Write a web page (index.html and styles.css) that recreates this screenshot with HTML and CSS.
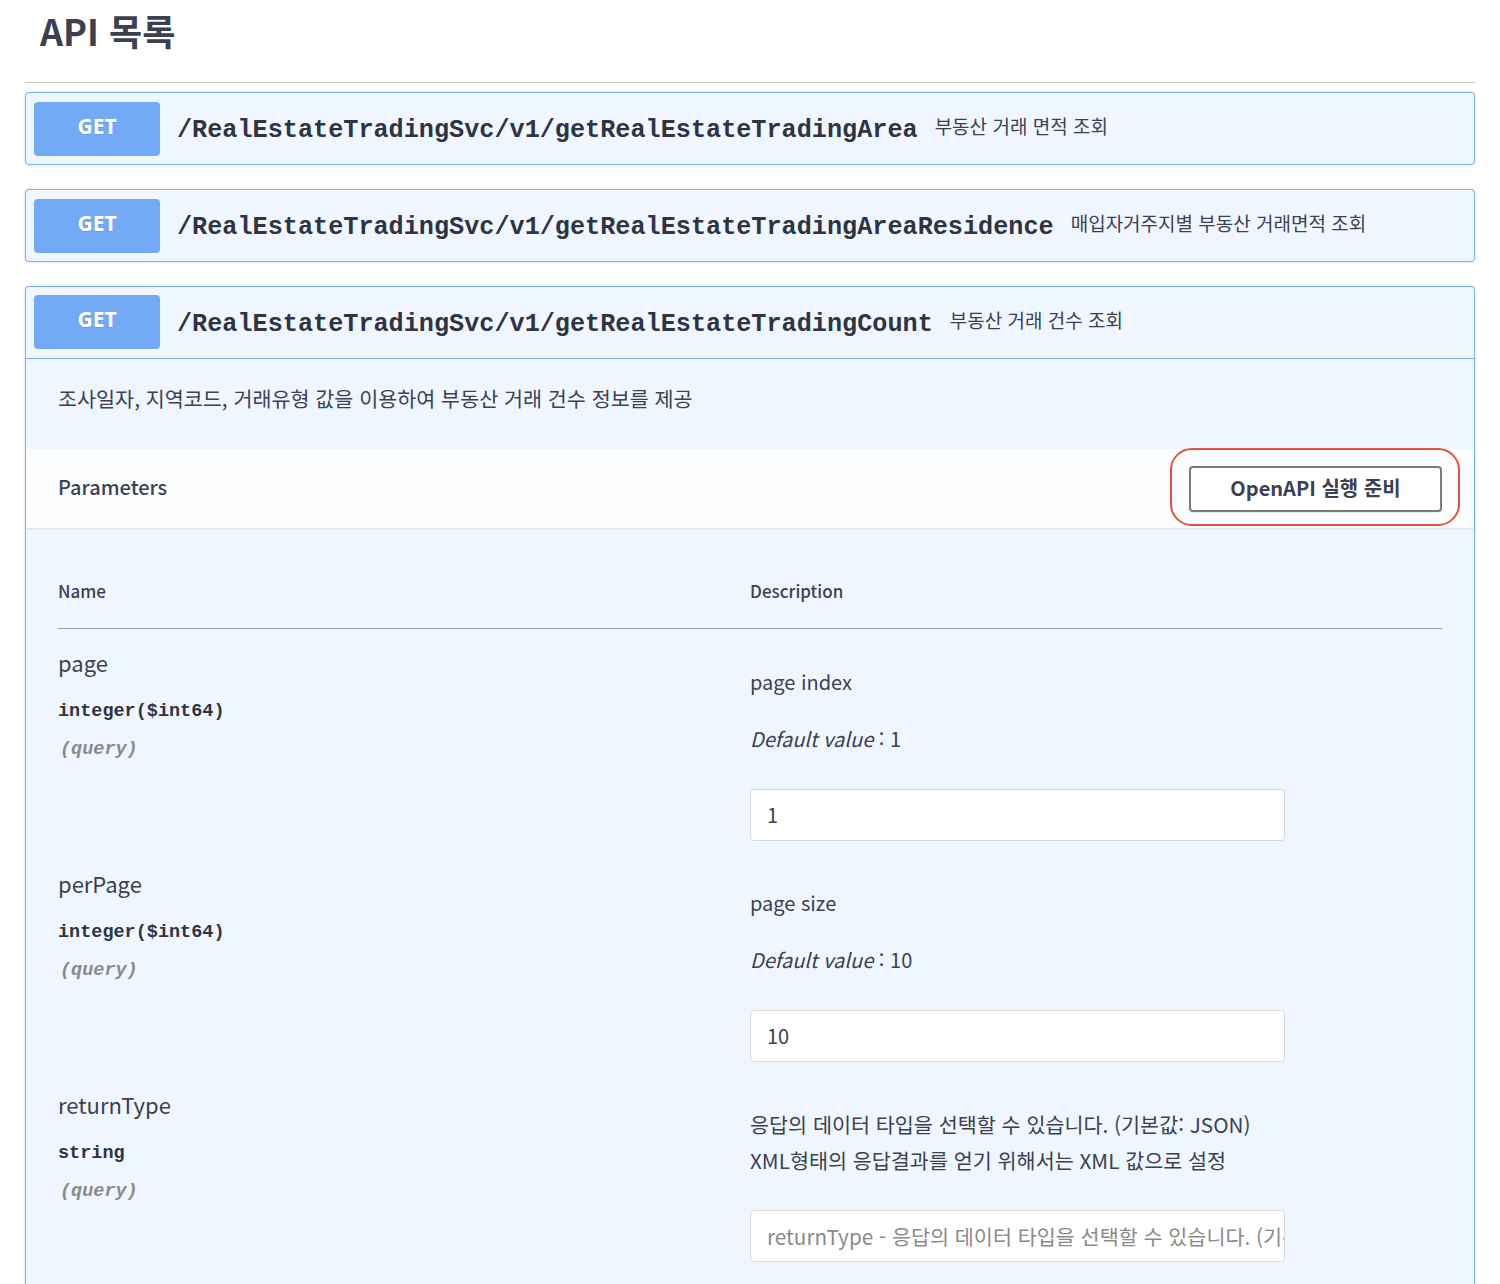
FILE: index.html
```html
<!DOCTYPE html>
<html lang="ko">
<head>
<meta charset="utf-8">
<title>API 목록</title>
<link rel="stylesheet" href="styles.css">
</head>
<body>
<div class="page">
  <h1 class="title">API 목록</h1>
  <div class="rule"></div>

  <div class="op">
    <div class="op-head">
      <span class="method">GET</span>
      <span class="path">/RealEstateTradingSvc/v1/getRealEstateTradingArea</span>
      <span class="summary">부동산 거래 면적 조회</span>
    </div>
  </div>

  <div class="op">
    <div class="op-head">
      <span class="method">GET</span>
      <span class="path">/RealEstateTradingSvc/v1/getRealEstateTradingAreaResidence</span>
      <span class="summary">매입자거주지별 부동산 거래면적 조회</span>
    </div>
  </div>

  <div class="op op-open">
    <div class="op-head op-head-open">
      <span class="method">GET</span>
      <span class="path">/RealEstateTradingSvc/v1/getRealEstateTradingCount</span>
      <span class="summary">부동산 거래 건수 조회</span>
    </div>
    <div class="op-desc">조사일자, 지역코드, 거래유형 값을 이용하여 부동산 거래 건수 정보를 제공</div>
    <div class="params-head">
      <span class="params-title">Parameters</span>
      <div class="try-wrap">
        <button class="try-btn">OpenAPI 실행 준비</button>
        <span class="ring"></span>
      </div>
    </div>
    <div class="params">
      <div class="thead">
        <span class="th">Name</span>
        <span class="th">Description</span>
      </div>

      <div class="prow">
        <div class="pname">
          <div class="pn">page</div>
          <div class="ptype">integer($int64)</div>
          <div class="pin">(query)</div>
        </div>
        <div class="pdesc">
          <p>page index</p>
          <p><i>Default value</i> : 1</p>
          <div class="input">1</div>
        </div>
      </div>

      <div class="prow">
        <div class="pname">
          <div class="pn">perPage</div>
          <div class="ptype">integer($int64)</div>
          <div class="pin">(query)</div>
        </div>
        <div class="pdesc">
          <p>page size</p>
          <p><i>Default value</i> : 10</p>
          <div class="input">10</div>
        </div>
      </div>

      <div class="prow">
        <div class="pname">
          <div class="pn">returnType</div>
          <div class="ptype">string</div>
          <div class="pin">(query)</div>
        </div>
        <div class="pdesc">
          <p class="kr">응답의 데이터 타입을 선택할 수 있습니다. (기본값: JSON)<br>XML형태의 응답결과를 얻기 위해서는 XML 값으로 설정</p>
          <div class="input placeholder">returnType - 응답의 데이터 타입을 선택할 수 있습니다. (기본값: JSON)</div>
        </div>
      </div>
    </div>
  </div>
</div>
</body>
</html>
```

FILE: styles.css
```css
html, body {
  margin: 0;
  padding: 0;
  background: #ffffff;
}
body {
  font-family: "Noto Sans CJK KR", "Noto Sans", sans-serif;
  color: #3b4151;
}
.page {
  padding: 0 25px 0 25px;
}
.title {
  margin: 0;
  padding: 6px 15px 2px 15px;
  height: 73px;
  box-sizing: border-box;
  font-size: 36px;
  line-height: 48px;
  font-weight: 700;
  color: #3b4151;
}
.rule {
  height: 1px;
  background: #c8c8c8;
  margin: 9px 0 9px 0;
}
.op {
  background: #eff6ff;
  border: 1px solid #79b0f6;
  border-radius: 4px;
  box-shadow: 0 0 3px rgba(0, 0, 0, 0.15);
  margin-bottom: 24px;
}
.op-head {
  display: flex;
  align-items: center;
  padding: 8px;
  height: 71px;
  box-sizing: border-box;
}
.op-head-open {
  border-bottom: 1px solid #79b0f6;
  height: 72px;
  padding-bottom: 9px;
}
.method {
  width: 126px;
  height: 54px;
  border-radius: 4px;
  background: #73aaf5;
  color: #ffffff;
  font-family: "Noto Sans", sans-serif;
  font-weight: 700;
  font-size: 21px;
  display: flex;
  align-items: center;
  justify-content: center;
  padding-bottom: 6px;
  box-sizing: border-box;
  text-shadow: 0 1px 0 rgba(0, 0, 0, 0.1);
  flex: none;
}
.path {
  margin-left: 17px;
  margin-top: 4px;
  font-family: "Liberation Mono", "Courier New", monospace;
  font-weight: 700;
  font-size: 25.2px;
  color: #2f3441;
  letter-spacing: 0;
}
.summary {
  margin-left: 17px;
  margin-bottom: 6px;
  font-size: 19px;
  color: #3b4151;
}
.op-desc {
  padding: 26px 32px 38px 32px;
  font-size: 20.7px;
  line-height: 26px;
}
.params-head {
  display: flex;
  align-items: center;
  justify-content: space-between;
  height: 79px;
  padding: 0 32px;
  background: rgba(255, 255, 255, 0.75);
  box-shadow: 0 1px 2px rgba(0, 0, 0, 0.1);
}
.params-title {
  font-size: 20px;
  font-weight: 500;
  color: #3b4151;
  margin-bottom: 4px;
}
.try-wrap {
  position: relative;
}
.try-btn {
  width: 253px;
  height: 46px;
  border: 2px solid #7b7b7b;
  border-radius: 4px;
  background: #ffffff;
  box-shadow: 0 1px 2px rgba(0, 0, 0, 0.1);
  font-family: "Noto Sans CJK KR", "Noto Sans", sans-serif;
  font-weight: 700;
  font-size: 20px;
  color: #3b4151;
  padding: 0 0 3px 0;
  display: block;
}
.ring {
  position: absolute;
  left: -19px;
  right: -18px;
  top: -18px;
  bottom: -14px;
  border: 2px solid #e6533b;
  border-radius: 22px;
  pointer-events: none;
}
.params {
  padding: 51px 32px 40px 32px;
}
.thead {
  display: grid;
  grid-template-columns: 692px 1fr;
  font-size: 17px;
  line-height: 24px;
  font-weight: 500;
  padding-bottom: 25px;
  border-bottom: 1px solid #9aa0a8;
}
.prow {
  display: grid;
  grid-template-columns: 692px 1fr;
  align-items: start;
  padding-bottom: 9px;
}
.pname {
  padding-top: 18px;
}
.pn {
  font-size: 22px;
  line-height: 30px;
  color: #3b4151;
}
.ptype {
  margin-top: 23px;
  font-family: "Liberation Mono", "Courier New", monospace;
  font-weight: 700;
  font-size: 18.5px;
  line-height: 24px;
  color: #2f3441;
}
.pin {
  margin-top: 14px;
  font-family: "Liberation Mono", "Courier New", monospace;
  font-weight: 700;
  font-style: italic;
  font-size: 18.5px;
  line-height: 24px;
  color: #8a8a8a;
  padding-left: 2px;
}
.pdesc {
  padding-top: 35px;
}
.pdesc p {
  margin: 0 0 21px 0;
  font-size: 20px;
  line-height: 36px;
  color: #3b4151;
}
.pdesc p.kr {
  font-size: 20.7px;
}
.pdesc p:last-of-type {
  margin-bottom: 32px;
}
.pdesc i {
  font-style: italic;
}
.input {
  width: 535px;
  height: 52px;
  box-sizing: border-box;
  background: #ffffff;
  border: 1px solid #d9d9d9;
  border-radius: 4px;
  padding: 0 16px;
  font-size: 20px;
  line-height: 50px;
  color: #3b4151;
  white-space: nowrap;
  overflow: hidden;
}
.placeholder {
  color: #8a8a8a;
  font-size: 20.7px;
}
```
